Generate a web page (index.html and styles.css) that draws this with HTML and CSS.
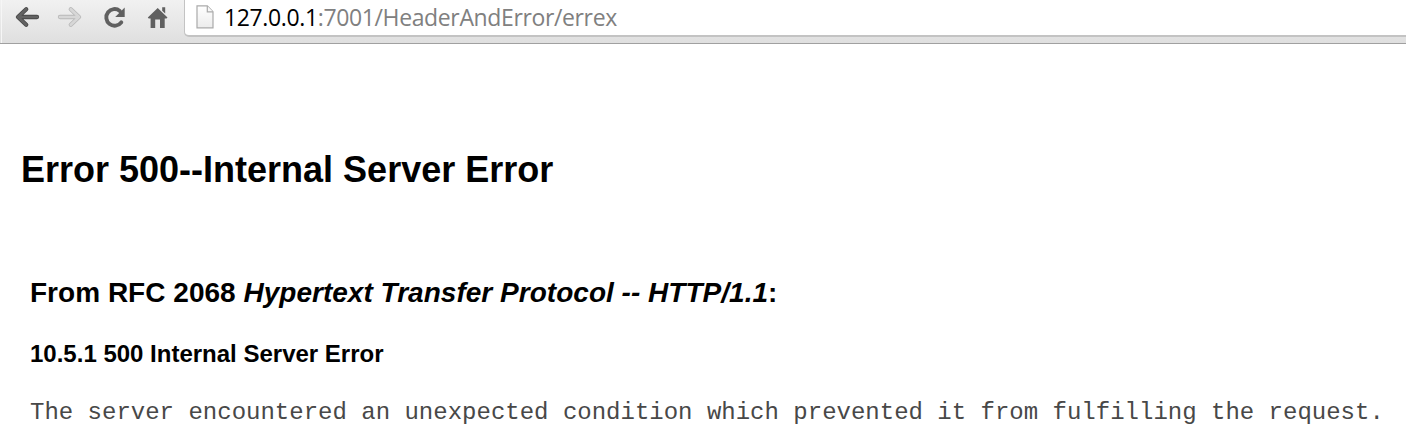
FILE: index.html
```html
<!DOCTYPE html>
<html lang="en">
<head>
<meta charset="utf-8">
<title>Error 500--Internal Server Error</title>
<link rel="stylesheet" href="styles.css">
</head>
<body>
<header class="toolbar">
  <svg class="nav" width="184" height="43" viewBox="0 0 184 43">
    <path d="M1.5 0V43" stroke="#f6f6f6"/>
    <g fill="none" stroke-linecap="round" stroke-linejoin="round">
      <path d="M26.2 9.2L18 17L26.2 24.8M18.5 17H37" stroke="#484848" stroke-width="4.3"/>
      <path d="M26.2 9.2L18 17L26.2 24.8M18.5 17H37" stroke="#626262" stroke-width="2.6"/>
      <path d="M70.8 9.2L79 17L70.8 24.8M78.5 17H60" stroke="#b9b9b9" stroke-width="4.3"/>
      <path d="M70.8 9.2L79 17L70.8 24.8M78.5 17H60" stroke="#d7d7d7" stroke-width="2.6"/>
    </g>
    <path d="M121.3 22.3A8.3 8.3 0 1 1 119.8 10.9" fill="none" stroke="#606060" stroke-width="3.9" stroke-linecap="round"/>
    <path d="M124.7 7.4V16.9H115.2Z" fill="#606060"/>
    <path d="M157.7 8L167.5 17.5L166.5 18.5H164.7V28H160V19.5H155.2V28H150.6V18.5H148.7L147.8 17.5ZM162.2 7.2H165.2V13.5L162.2 10.7Z" fill="#606060"/>
  </svg>
  <div class="address">
    <svg class="page-icon" width="18" height="24" viewBox="0 0 18 24">
      <defs><linearGradient id="paper" x2="0" y2="1"><stop stop-color="#fff"/><stop offset="1" stop-color="#ececec"/></linearGradient></defs>
      <path d="M1 .9H11.3L17 6.8V22.8H1Z" fill="url(#paper)" stroke="#aaa" stroke-width="1.2"/>
      <path d="M11.3 .9V6.8H17" fill="#f8f8f8" stroke="#aaa" stroke-width="1.2"/>
    </svg>
    <span class="url"><span class="host">127.0.0.1</span>:7001/HeaderAndError/errex</span>
  </div>
</header>
<main class="content">
  <h1 class="title">Error 500--Internal Server Error</h1>
  <section class="details">
    <h3 class="source">From RFC 2068 <i>Hypertext Transfer Protocol -- HTTP/1.1</i>:</h3>
    <h4 class="section-title">10.5.1 500 Internal Server Error</h4>
    <p class="message">The server encountered an unexpected condition which prevented it from fulfilling the request.</p>
  </section>
</main>
</body>
</html>
```
FILE: styles.css
```css
body {
  margin: 0;
  height: 433px;
  overflow: hidden;
  background: #fff;
  color: #000;
  font-family: "Liberation Sans", Arial, sans-serif;
}
.toolbar {
  display: flex;
  align-items: flex-start;
  box-sizing: border-box;
  height: 44px;
  border-bottom: 1px solid #a0a0a0;
  background: linear-gradient(#f1f1f1, #dfdfdf);
}
.nav {
  flex: none;
}
.address {
  display: flex;
  flex: 1;
  box-sizing: border-box;
  height: 37px;
  padding-left: 11px;
  border: solid #c3c3c3;
  border-width: 0 0 2px 1px;
  border-bottom-left-radius: 5px;
  background: #fff;
}
.page-icon {
  flex: none;
  margin: 5px 10px 0 0;
}
.url {
  color: #808080;
  font: 23px/34px "Open Sans", sans-serif;
  letter-spacing: -0.37px;
  white-space: nowrap;
}
.host {
  color: #000;
}
.content {
  padding: 105px 0 0 21px;
}
.title {
  margin: 0;
  font-size: 36px;
  line-height: 42px;
}
.details {
  padding: 86px 0 0 9px;
}
.source {
  margin: 0 0 31px;
  font-size: 28px;
  line-height: 32px;
  letter-spacing: 0.02px;
}
.section-title {
  margin: 0 0 31px;
  font-size: 24px;
  line-height: 28px;
}
.message {
  margin: 0;
  color: #484848;
  font: 24px/28px "Liberation Mono", "Courier New", monospace;
  white-space: nowrap;
}
```
